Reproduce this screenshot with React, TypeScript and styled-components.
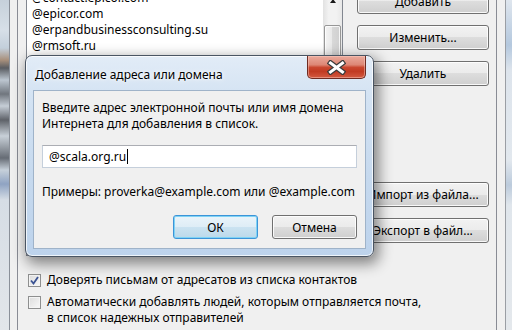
import styled, { createGlobalStyle } from 'styled-components';

const GlobalStyle = createGlobalStyle`
  html, body {
    margin: 0;
    padding: 0;
  }
  body {
    width: 512px;
    height: 330px;
    overflow: hidden;
    background: #f0f0f0;
    font-family: 'Noto Sans', 'Liberation Sans', sans-serif;
    font-size: 12px;
    color: #000;
  }
`;

const Screen = styled.div`
  position: relative;
  width: 512px;
  height: 330px;
  overflow: hidden;
  display: flex;
`;

const GlassEdge = styled.div<{ side: 'left' | 'right' }>`
  flex: none;
  width: ${({ side }) => (side === 'left' ? 9 : 6)}px;
  background: ${({ side }) =>
    side === 'left'
      ? `linear-gradient(180deg, #c6d0da 0px, #d7dfe8 30px, #c3cfdb 48px, #a8907c 60px, #5a5d62 68px, #bcc6d0 80px, #70767e 94px, #c5cdd6 106px, #5e6269 120px, #c8d0d8 136px, #666c75 158px, #c6d0da 170px, #8fa3c2 184px, #d6dde5 200px, #e2e6ea 330px)`
      : `linear-gradient(180deg, #dfe6ee 0px, #b4c8de 45px, #dde4ec 70px, #e2e8ee 160px, #bccbdc 185px, #e0e6ec 205px, #e4e8ec 330px)`};
`;

const WindowFrame = styled.div`
  flex: 1;
  display: flex;
  background: #f0f0f0;
  border-left: 1px solid #8a9099;
  border-right: 1px solid #9a9ea4;
  padding: 0 8px 0 7px;
`;

const TabPage = styled.div`
  flex: 1;
  display: flex;
  flex-direction: column;
  border-left: 1px solid #898c95;
  border-right: 1px solid #898c95;
  padding: 0 7px 0 8px;
  margin-top: -12px;
`;

const TopRow = styled.div`
  display: flex;
  gap: 14px;
  height: 268px;
`;

const ListBox = styled.div`
  flex: 1;
  display: flex;
  background: #fff;
  border: 1px solid #828790;
`;

const ListItems = styled.ul`
  flex: 1;
  list-style: none;
  margin: 0;
  padding: 1px 0 0 5px;
`;

const ListItem = styled.li`
  height: 16px;
  line-height: 16px;
  white-space: nowrap;
`;

const ScrollBar = styled.div`
  width: 19px;
  display: flex;
  flex-direction: column;
  background: linear-gradient(90deg, #e2e2e2, #f2f2f2 30%, #f2f2f2 70%, #e8e8e8);
`;

const ScrollArrow = styled.div`
  height: 17px;
  display: flex;
  align-items: flex-end;
  justify-content: center;
  padding-bottom: 3px;
  box-sizing: border-box;
`;

const ArrowTriangle = styled.span`
  width: 0;
  height: 0;
  border-left: 3.5px solid transparent;
  border-right: 3.5px solid transparent;
  border-bottom: 4px solid #1a1a1a;
`;

const ScrollThumb = styled.div`
  margin: 19px 1px 0 1px;
  height: 120px;
  border: 1px solid #979797;
  border-radius: 2px;
  background: linear-gradient(90deg, #f4f4f4, #e8e8e8 50%, #d8d8d8 50%, #d0d0d0);
  box-shadow: inset 0 0 0 1px rgba(255, 255, 255, 0.8);
`;

const ButtonColumn = styled.div`
  width: 132px;
  display: flex;
  flex-direction: column;
  gap: 11px;
  padding-top: 1px;
`;

const WinButton = styled.button<{ primary?: boolean; push?: boolean }>`
  height: 25px;
  flex: none;
  padding: 0;
  font-family: inherit;
  font-size: 12px;
  color: #000;
  border-radius: 3px;
  border: 1px solid ${({ primary }) => (primary ? '#3c94d8' : '#707070')};
  background: ${({ primary }) =>
    primary
      ? 'linear-gradient(180deg, #eaf4fa 0%, #deedf6 50%, #cbe3f1 50%, #bcd9ea 100%)'
      : 'linear-gradient(180deg, #f2f2f2 0%, #ebebeb 50%, #dddddd 50%, #cfcfcf 100%)'};
  box-shadow: inset 0 0 0 1px ${({ primary }) => (primary ? '#7fd3f5' : 'rgba(255,255,255,0.85)')};
  margin-top: ${({ push }) => (push ? 'auto' : '0')};
  white-space: nowrap;
`;

const LowerGap = styled.div`
  height: 1px;
  margin-top: 1px;
`;

const Options = styled.div`
  display: flex;
  flex-direction: column;
  gap: 6px;
  margin-top: 16px;
`;

const OptionRow = styled.label`
  display: flex;
  align-items: flex-start;
  gap: 6px;
  padding-left: 2px;
  line-height: 16px;
`;

const CheckBox = styled.span`
  flex: none;
  width: 13px;
  height: 13px;
  margin-top: 2px;
  box-sizing: border-box;
  border: 1px solid #8e8f8f;
  background: linear-gradient(135deg, #dcdcdc, #f8f8f8);
  box-shadow: inset 0 0 0 1px #f4f4f4;
  display: flex;
  align-items: center;
  justify-content: center;
`;

const Dialog = styled.div`
  position: absolute;
  left: 25px;
  top: 55px;
  width: 349px;
  height: 202px;
  box-sizing: border-box;
  border: 1px solid #4a5563;
  border-radius: 7px;
  padding: 0 7px 7px 7px;
  display: flex;
  flex-direction: column;
  background: linear-gradient(180deg, #e2ecf7 0%, #d4e3f3 20%, #c6d9ee 60%, #bdd3ec 100%);
  box-shadow: inset 0 0 0 1px rgba(255, 255, 255, 0.75), 3px 5px 14px 2px rgba(0, 0, 0, 0.45);
`;

const Caption = styled.div`
  height: 34px;
  display: flex;
  justify-content: space-between;
  align-items: flex-start;
`;

const CaptionTitle = styled.div`
  margin: 11px 0 0 2px;
  line-height: 16px;
  text-shadow: 0 0 6px #fff, 0 0 3px #fff;
`;

const CloseButton = styled.div`
  width: 59px;
  height: 23px;
  box-sizing: border-box;
  border: 1px solid #6e2b22;
  border-top: none;
  border-radius: 0 0 5px 5px;
  background: linear-gradient(180deg, #eaaa9c 0%, #dd8775 40%, #c9472f 52%, #c13a22 70%, #d35a41 100%);
  box-shadow: inset 0 0 0 1px rgba(255, 210, 200, 0.45);
  display: flex;
  align-items: center;
  justify-content: center;
`;

const ClientArea = styled.div`
  flex: 1;
  background: #f0f0f0;
  border: 1px solid #9fb3c9;
  padding: 9px 8px;
  display: flex;
  flex-direction: column;
`;

const Prompt = styled.div`
  line-height: 16px;
`;

const TextField = styled.div`
  margin-top: 13px;
  height: 23px;
  box-sizing: border-box;
  border: 1px solid #c5cfdb;
  border-top-color: #abadb3;
  background: #fff;
  padding: 0 5px 0 6px;
  display: flex;
  align-items: center;
  line-height: 16px;
`;

const Caret = styled.span`
  width: 1px;
  height: 15px;
  background: #000;
  margin-left: 1px;
`;

const Examples = styled.div`
  margin-top: 16px;
  line-height: 16px;
`;

const DialogButtons = styled.div`
  margin-top: 15px;
  display: flex;
  justify-content: flex-end;
  gap: 14px;
`;

const DialogButton = styled(WinButton)`
  width: 85px;
  height: 24px;
`;

const domains = ['@contact.epicor.com', '@epicor.com', '@erpandbusinessconsulting.su', '@rmsoft.ru'];

const CloseGlyph = () => (
  <svg width="19" height="15" viewBox="0 0 19 15">
    <path d="M3.5 3 L15.5 12 M15.5 3 L3.5 12" stroke="#3b3b3b" strokeWidth="5.4" strokeLinecap="square" />
    <path d="M3.5 3 L15.5 12 M15.5 3 L3.5 12" stroke="#ffffff" strokeWidth="3" strokeLinecap="square" />
  </svg>
);

const CheckMark = () => (
  <svg width="9" height="9" viewBox="0 0 9 9">
    <path d="M1 4.5 L3.5 7.5 L8 1" fill="none" stroke="#3b5393" strokeWidth="1.8" />
  </svg>
);

export default function App() {
  return (
    <>
      <GlobalStyle />
      <Screen>
        <GlassEdge side="left" />
        <WindowFrame>
          <TabPage>
            <TopRow>
              <ListBox>
                <ListItems>
                  {domains.map((d) => (
                    <ListItem key={d}>{d}</ListItem>
                  ))}
                </ListItems>
                <ScrollBar>
                  <ScrollArrow>
                    <ArrowTriangle />
                  </ScrollArrow>
                  <ScrollThumb />
                </ScrollBar>
              </ListBox>
              <ButtonColumn>
                <WinButton>Добавить</WinButton>
                <WinButton>Изменить...</WinButton>
                <WinButton>Удалить</WinButton>
                <WinButton push>Импорт из файла...</WinButton>
                <WinButton>Экспорт в файл...</WinButton>
                <LowerGap />
              </ButtonColumn>
            </TopRow>
            <Options>
              <OptionRow>
                <CheckBox>
                  <CheckMark />
                </CheckBox>
                <span>Доверять письмам от адресатов из списка контактов</span>
              </OptionRow>
              <OptionRow>
                <CheckBox />
                <span>
                  Автоматически добавлять людей, которым отправляется почта,
                  <br />в список надежных отправителей
                </span>
              </OptionRow>
            </Options>
          </TabPage>
        </WindowFrame>
        <GlassEdge side="right" />

        <Dialog>
          <Caption>
            <CaptionTitle>Добавление адреса или домена</CaptionTitle>
            <CloseButton>
              <CloseGlyph />
            </CloseButton>
          </Caption>
          <ClientArea>
            <Prompt>
              Введите адрес электронной почты или имя домена
              <br />
              Интернета для добавления в список.
            </Prompt>
            <TextField>
              @scala.org.ru
              <Caret />
            </TextField>
            <Examples>Примеры: proverka@example.com или @example.com</Examples>
            <DialogButtons>
              <DialogButton primary>ОК</DialogButton>
              <DialogButton>Отмена</DialogButton>
            </DialogButtons>
          </ClientArea>
        </Dialog>
      </Screen>
    </>
  );
}
